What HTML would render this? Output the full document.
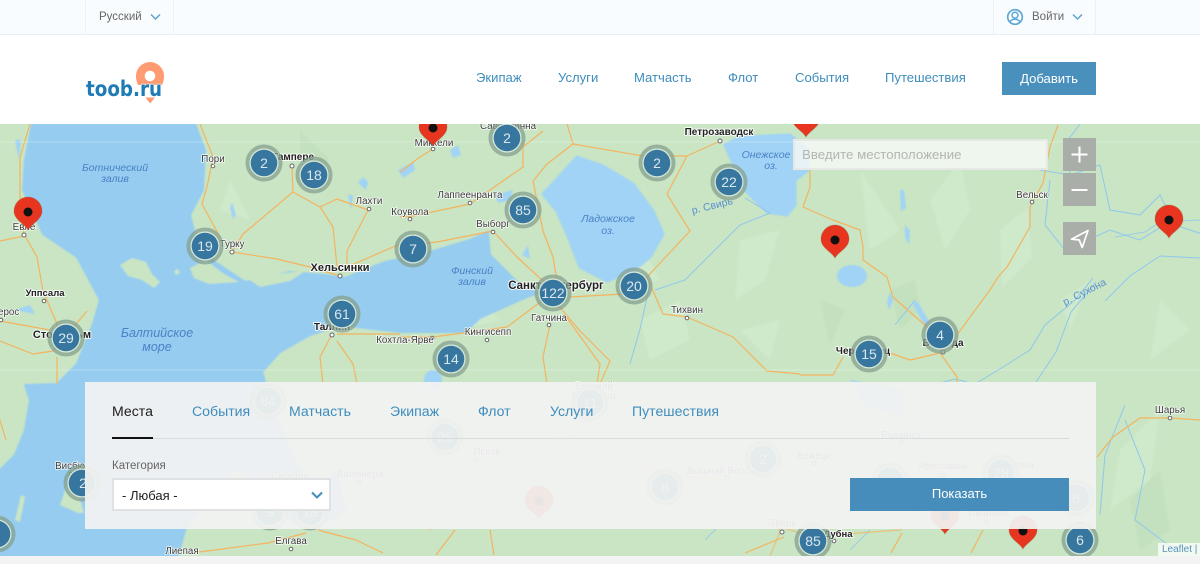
<!DOCTYPE html>
<html lang="ru"><head><meta charset="utf-8"><title>toob.ru</title>
<style>
*{box-sizing:border-box}
html,body{margin:0;padding:0;width:1200px;height:564px;overflow:hidden;background:#f3f3f3;font-family:"Liberation Sans",sans-serif}
.abs{position:absolute}
#top{left:0;top:0;width:1200px;height:35px;background:#f9fcfe;border-bottom:1px solid #eceff1}
.sep{position:absolute;top:0;width:1px;height:34px;background:#eef1f3}
.tt{position:absolute;top:10px;font-size:11.5px;line-height:14px;color:#666}
#head{left:0;top:35px;width:1200px;height:89px;background:#fff}
.nav{position:absolute;top:70px;font-size:13.1px;line-height:15px;color:#3f8dbd}
#add{left:1002px;top:62px;width:94px;height:33px;background:#4a90bd;color:#fff;font-size:13.1px;line-height:33px;text-align:center}
#map{left:0;top:124px;width:1200px;height:432px;overflow:hidden}
#panel{left:85px;top:382px;width:1011px;height:147px;background:rgba(241,242,241,.94)}
.tab{position:absolute;top:403px;font-size:14.1px;line-height:16px;color:#3f8dbd}
#search{left:793px;top:139px;width:255px;height:31px;background:rgba(248,249,247,.82);border:2px solid #e6e8e4;font-size:13.3px;line-height:27px;padding-left:7px;color:#b3b7b1}
.ctl{position:absolute;left:1063px;width:33px;height:33px;background:#a9afa8}
#sel{left:112px;top:478px;width:219px;height:33px;background:#fff;border:2px solid #dfe1e2;font-size:13px;line-height:32px;padding-left:8px;color:#222}
#show{left:850px;top:478px;width:219px;height:33px;background:#468dbb;color:#fff;font-size:13px;line-height:32px;text-align:center}
#leaf{left:1158px;top:543px;width:42px;height:13px;background:rgba(255,255,255,.75);font-size:10px;line-height:14px;padding-left:4px;color:#5b93bd;white-space:nowrap}
svg text{font-family:"Liberation Sans",sans-serif}
.l{font-size:9.8px;fill:#3a3a3a;stroke:#fff;stroke-width:1.6px;stroke-opacity:.85;paint-order:stroke;text-anchor:middle;stroke-linejoin:round}
.b{font-size:10px;font-weight:bold;fill:#222;stroke:#fff;stroke-width:2px;stroke-opacity:.85;paint-order:stroke;text-anchor:middle;stroke-linejoin:round}
.w{font-size:10.5px;font-style:italic;fill:#4a82c8;text-anchor:middle}
.c{font-size:14px;fill:#dbe7ee;text-anchor:middle}
</style></head><body>

<div class="abs" id="top">
<div class="sep" style="left:85px"></div><div class="sep" style="left:173px"></div>
<div class="sep" style="left:993px"></div><div class="sep" style="left:1095px"></div>
<div class="tt" style="left:99px">Русский</div>
<svg class="abs" style="left:150px;top:13px" width="11" height="8"><path d="M1 1.500 5.500 6 10 1.500" fill="none" stroke="#5fa3cc" stroke-width="1.500"/></svg>
<svg class="abs" style="left:1006px;top:8px" width="18" height="18" viewBox="0 0 18 18"><circle cx="9" cy="9" r="7.300" fill="none" stroke="#5fa8d3" stroke-width="1.700"/><circle cx="9" cy="7.200" r="3" fill="none" stroke="#5fa8d3" stroke-width="1.500"/><path d="M3.800 14.200C5 11.800 7 11.300 9 11.300s4 .5 5.200 2.900" fill="none" stroke="#5fa8d3" stroke-width="1.500"/></svg>
<div class="tt" style="left:1032px">Войти</div>
<svg class="abs" style="left:1072px;top:13px" width="11" height="8"><path d="M1 1.500 5.500 6 10 1.500" fill="none" stroke="#5fa3cc" stroke-width="1.500"/></svg>
</div>

<div class="abs" id="head"></div>
<svg class="abs" style="left:80px;top:58px" width="90" height="50" viewBox="80 58 90 50">
<path d="M136 76a14 14 0 1 1 28 0c0 4-1 7-2 9h-24c-1-2-2-5-2-9z" fill="#ff9b72"/>
<circle cx="150" cy="76" r="5.300" fill="#fff"/>
<path d="M145.500 97.500h9.500L150.200 103.500z" fill="#ff9b72"/>
<text x="86" y="96" font-size="21" font-weight="bold" fill="#1f7bb5" textLength="76" lengthAdjust="spacingAndGlyphs" style="font-family:'DejaVu Sans',sans-serif;stroke:#fff;stroke-width:1.200px;paint-order:stroke">toob.ru</text>
</svg>
<div class="nav" style="left:476px">Экипаж</div>
<div class="nav" style="left:558px">Услуги</div>
<div class="nav" style="left:634px">Матчасть</div>
<div class="nav" style="left:728px">Флот</div>
<div class="nav" style="left:795px">События</div>
<div class="nav" style="left:885px">Путешествия</div>
<div class="abs" id="add">Добавить</div>

<div class="abs" id="map">
<svg width="1200" height="432" viewBox="0 124 1200 432" style="display:block">
<defs>
<filter id="soft" x="-2%" y="-2%" width="104%" height="104%"><feGaussianBlur stdDeviation=".7"/></filter>
<g id="pin"><path d="M0 0C-3-6-14-10-14-19A14 14 0 1 1 14-19C14-10 3-6 0 0Z" fill="#e8351f" stroke="#7a5a3a" stroke-opacity=".25" stroke-width="1"/><circle cy="-18" r="4.500" fill="#111"/></g>
<g id="cl"><circle r="16.500" fill="none" stroke="#85a08f" stroke-opacity=".75" stroke-width="4"/><circle r="14.500" fill="#d6e8d8"/><circle r="13.300" fill="#37779f"/></g>
</defs>
<rect x="0" y="124" width="1200" height="432" fill="#c9e5c3"/>
<g filter="url(#soft)">
<g fill="#cfe9cb">
<path d="M930 200l30-40 10 50-25 40zM1000 230l28-22 4 50-30 30zM740 240l40-10-15 50-30 20zM640 320l40-20 10 40-40 20zM1120 450l40-40-10 70-40 30zM1060 300l30-20-20 50zM860 170l40 60-30 20zM230 180l20 40-30-10zM1160 300l30 30-40 30zM740 330l40-10-10 40zM640 240l20 40-30 10zM470 290l30 30-40 10z"/>
</g>
<g fill="#c3e1be">
<path d="M1130 500l30-30 10 60-30 20zM1050 420l-20 60 30-20zM890 290l25-10 5 30-20 20zM820 300l25 10-15 35zM300 130l30 30-30 10z"/>
</g>
<path d="M32 124L195 124 205 150 203 190 190 215 195 235 215 262 245 282 290 272 325 275 345 278 385 262 420 255 470 240 488 232 490 255 520 285 538 293 520 300 480 318 465 332 400 332 340 325 310 335 280 352 262 372 272 405 285 440 300 470 325 495 335 470 345 510 320 528 290 520 260 480 235 470 205 500 185 530 178 556 0 556 0 470 15 455 25 430 30 400 25 385 57 384 77 364 93 324 100 300 77 257 43 234 23 190 25 160Z" fill="#95ccf0" stroke="#95ccf0" stroke-width="2" stroke-linejoin="round"/>
<path d="M547 190 577 157 603 166 633 184 653 211 663 234 650 257 633 271 607 281 580 267 567 234 557 211 543 194Z" fill="#a0d3f5" stroke="#a0d3f5" stroke-width="3" stroke-linejoin="round"/>
<path d="M725 145 740 137 790 135 808 150 808 170 795 180 795 205 787 215 767 212 745 190Z" fill="#a0d3f5" stroke="#a0d3f5" stroke-width="3" stroke-linejoin="round"/>
<g fill="#c9e5c3">
<path d="M120 265l12-7 14 4 6 12 8 8-6 6-12-8-14-4zM174 271l4-2 2 4-4 2zM190 268l16-8 18 14 15 8-30 2-15-6zM60 505l12-35 12 43-6 0zM15 520l6-25 4 2-5 25zM245 277l60-6-15 10-30 6zM288 404l20-4 0 20-18 8z"/>
</g>
<g fill="#a0d3f5">
<ellipse cx="852" cy="276" rx="15" ry="11"/><ellipse cx="433" cy="380" rx="9" ry="10"/>
<path d="M912 303l5-2 13 22-5 3zM890 292l-3 10 2 8 4-10zM450 150l8-5 3 10-8 3zM522 255l6-10 2 14zM398 170l15-8 2 8-12 8zM232 202l4 13-3 4-3-11zM348 195l5 0-2 15zM358 183l5-6 5 5-2 8zM495 195l18-5-3 10-12 3zM850 380l56 10-5 27-35-12zM303 170l7-3 4 14-7 6zM15 140l6 0-2 20zM30 305l-15 5 20 4zM900 190l4 0 2 18-5 3zM905 225l5 6-1 14-4-8z"/>
</g>
</g>
<g fill="none" stroke="#8fc7ee" stroke-width="1">
<path d="M1093 278l-18 22-30 25-15 25-35 22-20 12-20-5-30 8M1080 124l-15 20 5 30M650 284l-10 45-10 35M745 198l25 15-30 12-30 30-25 25-30 10M915 300l-20 25M1040 170l30 5 30-10 10 45 30 5 20-20 15 30 30 10M1050 180l-5 45 20 25 45-20 30 10 40-25M1200 258l-40-2-30 20-25 25M1125 420l20 50-10 50 40 30M1036 382l20-30 15-40 25-30M1125 405l-20 50-5 60"/>
<path d="M1200 220l-40 2-15 10-30 5M730 470l-5 50-20 20M870 530l-20 20" stroke-opacity=".8"/>
</g>
<g fill="none" stroke="#f4b35f" stroke-width="1.200" stroke-linejoin="round">
<path d="M200 124 213 157 207 187 202 204 220 237M232 252 243 234 293 192 292 166M293 192 320 207 333 227 337 267M320 207 337 199 368 210 347 251 347 267M232 252 277 259 310 267 340 276M340 270 400 244M30 124 20 157 20 197 24 234 37 257 43 291 57 324 55 340M0 241 24 236M0 321 50 330M0 341 33 354 53 351 87 311M57 357 57 384M332 334 320 357 323 384M337 341 353 364 357 384M337 334 400 334M400 172 420 157 433 149M400 217 413 216 470 204 523 167 523 147 543 131M413 244 437 242 493 231M493 231 517 257 543 281M533 181 547 164 573 144 567 124M573 144 643 156 687 156 720 141M533 181 543 231 553 257 557 281M687 156 667 194 690 231 647 277 623 294 570 297M647 277 663 314 687 317 733 337 767 371 800 374M547 297 507 327 433 337 400 337M550 324 543 357 547 384M557 304 580 331 610 361 600 384M567 318 600 364 597 384M1058 125 1050 147 1043 183 1030 207 1030 227 1007 267 998 277 990 290 970 317 957 335 940 353M810 170 810 187 803 207 833 220 860 230 863 247 863 260 887 277 893 297 927 327 940 340M890 353 910 360 940 353 957 377 957 390M800 375 833 375 843 357M1097 457 1113 437 1140 418 1170 418 1200 420M983 530 971 553M902 533 891 553M784 537 745 553M318 530 356 540 383 553M199 552 268 543 306 533M455 530 436 555M490 530 494 555M0 420 6 440" />
<path d="M540 390 600 440 760 520 790 530 830 540M480 462 590 430M480 462 430 530M610 385 640 470 720 480 780 530M950 480 900 530 830 535M960 390 940 480 1000 520M780 532 770 556" stroke-opacity=".7"/>
</g>
<g stroke="#fff" stroke-opacity=".28" stroke-width="1"><path d="M0 142H1200M0 370H1200"/></g>

<g fill="#fff" stroke="#666" stroke-width="1">
<circle cx="213" cy="166" r="1.800"/><circle cx="292" cy="166" r="2"/><circle cx="369" cy="209" r="1.800"/><circle cx="410" cy="219" r="1.800"/><circle cx="232" cy="252" r="2"/><circle cx="340" cy="276" r="2"/><circle cx="44" cy="301" r="1.800"/><circle cx="1" cy="320" r="1.800"/><circle cx="332" cy="335" r="2"/><circle cx="432" cy="338" r="1.800"/><circle cx="487" cy="340" r="1.800"/><circle cx="549" cy="325" r="1.800"/><circle cx="687" cy="318" r="1.800"/><circle cx="493" cy="232" r="1.800"/><circle cx="470" cy="203" r="1.800"/><circle cx="433" cy="149" r="1.800"/><circle cx="720" cy="141" r="2"/><circle cx="1032" cy="202" r="1.800"/><circle cx="943" cy="352" r="2"/><circle cx="1170" cy="418" r="1.800"/><circle cx="24" cy="235" r="2"/><circle cx="71" cy="474" r="1.800"/><circle cx="291" cy="549" r="1.800"/><circle cx="782" cy="532" r="2"/><circle cx="834" cy="541" r="1.800"/>
<circle cx="987" cy="522" r="1.800"/><circle cx="943" cy="475" r="1.800"/><circle cx="901" cy="442" r="1.800"/><circle cx="814" cy="463" r="1.800"/><circle cx="727" cy="478" r="1.800"/><circle cx="476" cy="460" r="1.800"/><circle cx="359" cy="482" r="1.800"/><circle cx="306" cy="525" r="2"/>
</g>

<g>
<text class="w" x="115" y="171">Ботнический</text><text class="w" x="115" y="182">залив</text>
<text class="w" style="font-size:12.500px" x="157" y="337">Балтийское</text><text class="w" style="font-size:12.500px" x="157" y="351">море</text>
<text class="w" x="472" y="274">Финский</text><text class="w" x="472" y="285">залив</text>
<text class="w" x="608" y="222">Ладожское</text><text class="w" x="608" y="234">оз.</text>
<text class="w" x="766" y="158">Онежское</text><text class="w" x="771" y="169">оз.</text>
<text class="w" style="font-style:normal;fill:#5c90d2" transform="translate(713 209) rotate(-14)" x="0" y="0">р. Свирь</text>
<text class="w" style="font-style:normal;fill:#5c90d2" transform="translate(1086 295) rotate(-27)" x="0" y="0">р. Сухона</text>
<text class="l" x="213" y="162">Пори</text><text class="b" x="293" y="160">Тампере</text><text class="l" x="369" y="204">Лахти</text><text class="l" x="410" y="215">Коувола</text><text class="l" x="232" y="247">Турку</text>
<text class="b" style="font-size:11px" x="340" y="271">Хельсинки</text><text class="b" style="font-size:9.500px" x="45" y="296">Уппсала</text><text class="l" x="-2" y="315">Вестерос</text><text class="b" style="font-size:11px" x="62" y="338">Стокгольм</text><text class="b" x="332" y="330">Таллин</text>
<text class="l" x="405" y="343">Кохтла-Ярве</text><text class="l" x="488" y="335">Кингисепп</text><text class="l" x="549" y="321">Гатчина</text><text class="b" style="font-size:11.500px" x="556" y="289">Санкт-Петербург</text><text class="l" x="687" y="313">Тихвин</text>
<text class="l" x="493" y="227">Выборг</text><text class="l" x="470" y="198">Лаппеенранта</text><text class="l" x="508" y="129">Савонлинна</text><text class="l" x="434" y="146">Миккели</text><text class="b" x="719" y="135">Петрозаводск</text>
<text class="l" x="1032" y="198">Вельск</text><text class="b" x="863" y="354">Череповец</text><text class="b" x="943" y="346">Вологда</text><text class="l" x="1170" y="413">Шарья</text><text class="l" x="24" y="230">Евле</text><text class="l" x="70" y="469">Висбю</text>
<text class="l" x="182" y="554">Лиепая</text><text class="l" x="291" y="544">Елгава</text><text class="l" x="783" y="526">Тверь</text><text class="b" style="font-size:9.500px" x="838" y="537">Дубна</text><text class="l" x="988" y="516">Иваново</text><text class="l" x="943" y="469">Ярославль</text>
<text class="l" x="1012" y="468">Кострома</text><text class="l" x="901" y="438">Рыбинск</text><text class="l" x="814" y="459">Бежецк</text><text class="l" x="726" y="474">Вышний Волочек</text><text class="l" x="487" y="455">Псков</text><text class="l" x="360" y="477">Валмиера</text><text class="l" x="290" y="479">Сигулда</text><text class="l" x="594" y="389">Великий</text><text class="l" x="594" y="399">Новгород</text>
</g>

<use href="#cl" x="264" y="163"/><use href="#cl" x="314" y="175"/><use href="#cl" x="205" y="246"/><use href="#cl" x="413" y="249"/><use href="#cl" x="523" y="210"/><use href="#cl" x="507" y="138"/><use href="#cl" x="657" y="163"/><use href="#cl" x="729" y="182"/><use href="#cl" x="553" y="293"/><use href="#cl" x="634" y="286"/><use href="#cl" x="451" y="359"/><use href="#cl" x="342" y="314"/><use href="#cl" x="66" y="338"/><use href="#cl" x="869" y="354"/><use href="#cl" x="940" y="335"/>
<use href="#cl" x="813" y="541"/><use href="#cl" x="1080" y="540"/><use href="#cl" x="82" y="483"/><use href="#cl" x="-3" y="534"/>
<use href="#cl" x="268" y="401"/><use href="#cl" x="590" y="403"/><use href="#cl" x="445" y="437"/><use href="#cl" x="763" y="459"/><use href="#cl" x="665" y="487"/><use href="#cl" x="1001" y="473"/><use href="#cl" x="1076" y="498"/><use href="#cl" x="890" y="481"/><use href="#cl" x="270" y="512"/><use href="#cl" x="310" y="512"/>
<g>
<text class="c" x="264" y="168">2</text><text class="c" x="314" y="180">18</text><text class="c" x="205" y="251">19</text><text class="c" x="413" y="254">7</text><text class="c" x="523" y="215">85</text><text class="c" x="507" y="143">2</text><text class="c" x="657" y="168">2</text><text class="c" x="729" y="187">22</text><text class="c" x="553" y="298">122</text><text class="c" x="634" y="291">20</text><text class="c" x="451" y="364">14</text><text class="c" x="342" y="319">61</text><text class="c" x="66" y="343">29</text><text class="c" x="869" y="359">15</text><text class="c" x="940" y="340">4</text>
<text class="c" x="813" y="546">85</text><text class="c" x="1080" y="545">6</text><text class="c" x="83" y="488">2</text>
<text class="c" x="268" y="406">84</text><text class="c" x="590" y="408">11</text><text class="c" x="445" y="442">25</text><text class="c" x="763" y="464">2</text><text class="c" x="665" y="492">8</text><text class="c" x="1001" y="478">28</text><text class="c" x="1076" y="503">8</text><text class="c" x="270" y="517">9</text><text class="c" x="310" y="517">18</text>
</g>
<use href="#pin" x="28" y="230"/><use href="#pin" x="433" y="146"/><use href="#pin" x="806" y="137"/><use href="#pin" x="835" y="258"/><use href="#pin" x="1169" y="238"/><use href="#pin" x="1023" y="549"/><use href="#pin" x="539" y="519"/><use href="#pin" x="945" y="534"/>
</svg>
</div>

<div class="abs" id="search">Введите местоположение</div>
<div class="ctl" style="top:138px"><svg width="33" height="33"><path d="M16.500 8.500v16M8.500 16.500h16" stroke="#fff" stroke-width="2" fill="none"/></svg></div>
<div class="ctl" style="top:173px"><svg width="33" height="33"><path d="M8.500 17h16" stroke="#fff" stroke-width="2" fill="none"/></svg></div>
<div class="ctl" style="top:222px"><svg width="33" height="33"><path d="M8.500 17.200 25 8.500 19.200 25.500 16.200 18Z" stroke="#fff" stroke-width="1.700" fill="none" stroke-linejoin="round"/></svg></div>

<div class="abs" id="panel"></div>
<div class="tab" style="left:112px;color:#1c1c1c">Места</div>
<div class="tab" style="left:192px">События</div>
<div class="tab" style="left:289px">Матчасть</div>
<div class="tab" style="left:390px">Экипаж</div>
<div class="tab" style="left:478px">Флот</div>
<div class="tab" style="left:550px">Услуги</div>
<div class="tab" style="left:632px">Путешествия</div>
<div class="abs" style="left:112px;top:438px;width:957px;height:1px;background:#d9dcdc"></div>
<div class="abs" style="left:112px;top:437px;width:41px;height:2px;background:#111"></div>
<div class="abs" style="left:112px;top:459px;font-size:11.500px;line-height:14px;color:#666">Категория</div>
<div class="abs" id="sel">- Любая -<svg class="abs" style="left:197px;top:11px" width="12" height="9"><path d="M1 1.500 6 6.500 11 1.500" fill="none" stroke="#3f8dbd" stroke-width="2"/></svg></div>
<div class="abs" id="show">Показать</div>
<div class="abs" id="leaf">Leaflet |</div>
</body></html>
